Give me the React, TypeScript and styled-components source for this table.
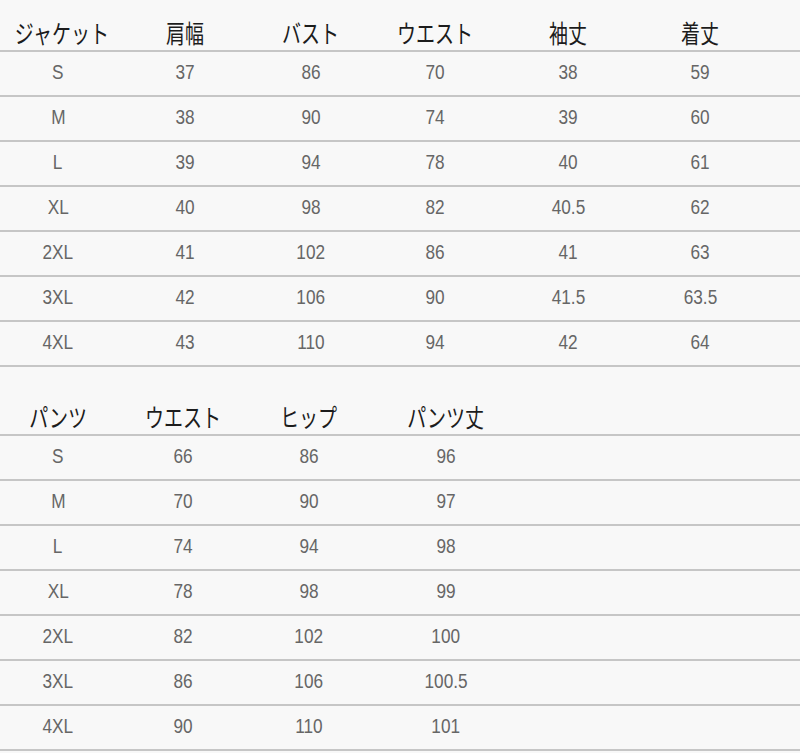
import styled, { createGlobalStyle } from "styled-components";

const GlobalStyle = createGlobalStyle`
  html, body {
    margin: 0;
    padding: 0;
    background: #f8f8f8;
  }
  #root {
    width: 800px;
    min-height: 753px;
    overflow: hidden;
  }
`;

const Page = styled.div`
  width: 800px;
  display: flex;
  flex-direction: column;
`;

const Table = styled.div<{ $gap?: number }>`
  display: flex;
  flex-direction: column;
  margin-top: ${(p) => p.$gap ?? 0}px;
`;

const Row = styled.div<{ $cols: string; $head?: boolean }>`
  display: grid;
  grid-template-columns: ${(p) => p.$cols};
  height: ${(p) => (p.$head ? 52 : 45)}px;
  border-bottom: 2px solid #c6c6c6;
  align-items: ${(p) => (p.$head ? "end" : "center")};
  padding-bottom: ${(p) => (p.$head ? 5 : 3)}px;
  box-sizing: border-box;
`;

const HeadCell = styled.div`
  text-align: center;
  white-space: nowrap;
  font-family: "Noto Sans CJK JP", "Noto Sans", sans-serif;
  font-size: 25px;
  line-height: 26px;
  color: #1c1c1c;

  span {
    display: inline-block;
    transform: scaleX(0.76);
  }
`;

const Cell = styled.div`
  text-align: center;
  white-space: nowrap;
  font-family: "Liberation Sans", Arial, sans-serif;
  font-size: 20px;
  line-height: 22px;
  color: #666;

  span {
    display: inline-block;
    transform: scaleX(0.86);
  }
`;

interface SizeTable {
  cols: string;
  head: string[];
  rows: string[][];
  gap?: number;
}

const tables: SizeTable[] = [
  {
    cols: "116px 138px 114px 134px 132px 132px 1fr",
    head: ["ジャケット", "肩幅", "バスト", "ウエスト", "袖丈", "着丈"],
    rows: [
      ["S", "37", "86", "70", "38", "59"],
      ["M", "38", "90", "74", "39", "60"],
      ["L", "39", "94", "78", "40", "61"],
      ["XL", "40", "98", "82", "40.5", "62"],
      ["2XL", "41", "102", "86", "41", "63"],
      ["3XL", "42", "106", "90", "41.5", "63.5"],
      ["4XL", "43", "110", "94", "42", "64"],
    ],
  },
  {
    cols: "116px 134px 118px 156px 1fr",
    head: ["パンツ", "ウエスト", "ヒップ", "パンツ丈"],
    gap: 17,
    rows: [
      ["S", "66", "86", "96"],
      ["M", "70", "90", "97"],
      ["L", "74", "94", "98"],
      ["XL", "78", "98", "99"],
      ["2XL", "82", "102", "100"],
      ["3XL", "86", "106", "100.5"],
      ["4XL", "90", "110", "101"],
    ],
  },
];

function App() {
  return (
    <Page>
      <GlobalStyle />
      {tables.map((t, ti) => (
        <Table key={ti} $gap={t.gap}>
          <Row $cols={t.cols} $head>
            {t.head.map((h) => (
              <HeadCell key={h}>
                <span>{h}</span>
              </HeadCell>
            ))}
          </Row>
          {t.rows.map((r) => (
            <Row key={r[0]} $cols={t.cols}>
              {r.map((v, i) => (
                <Cell key={i}>
                  <span>{v}</span>
                </Cell>
              ))}
            </Row>
          ))}
        </Table>
      ))}
    </Page>
  );
}

export default App;
